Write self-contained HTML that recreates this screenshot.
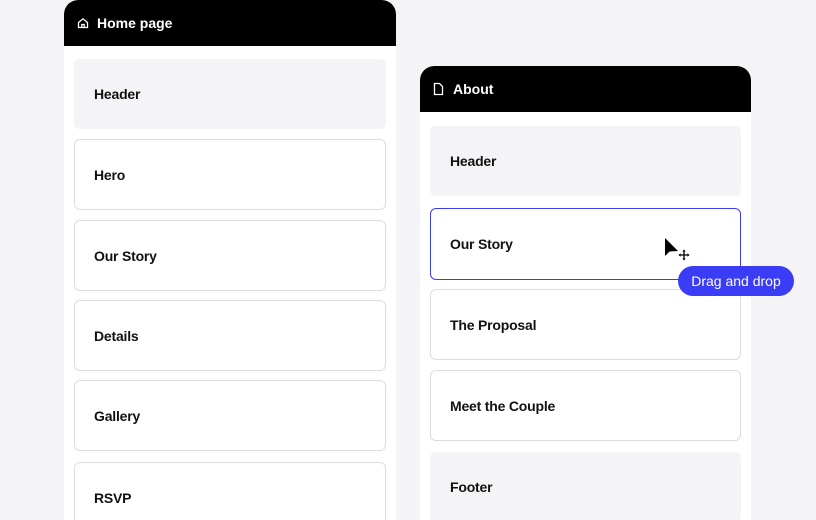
<!DOCTYPE html>
<html style="overflow:hidden;height:520px"><head><style>
*{margin:0;padding:0;box-sizing:border-box}
body{width:816px;height:520px;background:#f4f4f6;position:relative;overflow:hidden;font-family:"Liberation Sans",sans-serif}
.panel{position:absolute;background:#fff;overflow:hidden}
.hd{position:absolute;left:0;right:0;top:0;height:46px;background:#000;border-radius:14px 14px 0 0;color:#fff;font-weight:bold;font-size:14px;display:flex;align-items:center}
.it{position:absolute;height:71px;border:1px solid #dcdcdf;border-radius:6px;background:#fff;font-weight:bold;font-size:14px;color:#111;display:flex;align-items:center;padding-left:19px;letter-spacing:-0.2px}
.g{background:#f4f4f6;border-color:#f4f4f6}
.b{border-color:#3a3cf0}
</style></head><body>
<div class="panel" style="left:64px;top:0;width:332px;height:520px;border-radius:14px 14px 0 0">
 <div class="hd"><svg style="margin:0 8px 0 13px" width="12" height="12" viewBox="0 0 12 12" fill="none" stroke="#fff" stroke-width="1.3"><path d="M1.5 5.5L6 1.8L10.5 5.5V10.5H1.5Z"/><path d="M4.8 10.5V7.5H7.2V10.5"/></svg>Home page</div>
 <div class="it g" style="left:10px;top:59px;width:312px;height:70px">Header</div>
 <div class="it" style="left:10px;top:139px;width:312px">Hero</div>
 <div class="it" style="left:10px;top:220px;width:312px">Our Story</div>
 <div class="it" style="left:10px;top:300px;width:312px">Details</div>
 <div class="it" style="left:10px;top:380px;width:312px">Gallery</div>
 <div class="it" style="left:10px;top:462px;width:312px">RSVP</div>
</div>
<div class="panel" style="left:420px;top:66px;width:331px;height:454px;border-radius:14px 14px 0 0">
 <div class="hd"><svg style="margin:0 9px 0 13px" width="11" height="14" viewBox="0 0 11 14" fill="none" stroke="#fff" stroke-width="1.3"><path d="M1.5 1.5H6.5L9.5 4.5V12.5H1.5Z"/></svg>About</div>
 <div class="it g" style="left:10px;top:60px;width:311px;height:70px">Header</div>
 <div class="it b" style="left:10px;top:142px;width:311px;height:72px">Our Story</div>
 <div class="it" style="left:10px;top:223px;width:311px">The Proposal</div>
 <div class="it" style="left:10px;top:304px;width:311px">Meet the Couple</div>
 <div class="it g" style="left:10px;top:386px;width:311px;height:70px">Footer</div>
</div>
<svg style="position:absolute;left:664px;top:237px" width="28" height="26" viewBox="0 0 28 26"><path d="M1 1L1 19L5.5 14.5L14 14Z" fill="#000"/><g stroke="#000" stroke-width="1.3" fill="none"><path d="M20 14V22M16 18H24"/></g><path d="M20 12.5L18.3 14.5H21.7ZM20 23.5L18.3 21.5H21.7ZM14.5 18L16.5 16.3V19.7ZM25.5 18L23.5 16.3V19.7Z" fill="#000"/></svg>
<div style="position:absolute;left:678px;top:266px;width:116px;height:30px;background:#3a3cf6;border-radius:15px;color:#fff;font-size:14px;display:flex;align-items:center;justify-content:center">Drag and drop</div>
</body></html>
